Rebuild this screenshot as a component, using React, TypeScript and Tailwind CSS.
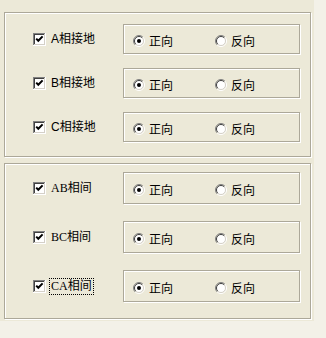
import React from 'react';

const etched = 'border border-[#aca899] shadow-[inset_1px_1px_0_#ffffff,1px_1px_0_#ffffff]';

function CheckBox() {
  return (
    <svg width="13" height="13" viewBox="0 0 13 13" className="shrink-0" shapeRendering="crispEdges">
      <rect x="0" y="0" width="13" height="13" fill="#ffffff" />
      <rect x="0" y="0" width="12" height="1" fill="#808080" />
      <rect x="0" y="0" width="1" height="12" fill="#808080" />
      <rect x="1" y="1" width="10" height="1" fill="#404040" />
      <rect x="1" y="1" width="1" height="10" fill="#404040" />
      <rect x="1" y="11" width="11" height="1" fill="#d4d0c8" />
      <rect x="11" y="1" width="1" height="11" fill="#d4d0c8" />
      <rect x="2" y="2" width="9" height="9" fill="#ffffff" />
      <path d="M3.2 5.6 L5.3 7.8 L9.6 3.4" stroke="#000" strokeWidth="2" fill="none" shapeRendering="auto" />
    </svg>
  );
}

function Radio({ checked }: { checked?: boolean }) {
  return (
    <svg width="12" height="12" viewBox="0 0 12 12" className="shrink-0">
      <circle cx="6" cy="6" r="4.5" fill="#ffffff" />
      <path d="M2.1 9.9 A5.5 5.5 0 0 1 9.9 2.1" stroke="#808080" strokeWidth="1" fill="none" />
      <path d="M9.9 2.1 A5.5 5.5 0 0 1 2.1 9.9" stroke="#ffffff" strokeWidth="1" fill="none" />
      <path d="M2.8 9.2 A4.5 4.5 0 0 1 9.2 2.8" stroke="#404040" strokeWidth="1" fill="none" />
      <path d="M9.2 2.8 A4.5 4.5 0 0 1 2.8 9.2" stroke="#d4d0c8" strokeWidth="1" fill="none" />
      {checked && <circle cx="6" cy="6" r="2" fill="#000" />}
    </svg>
  );
}

function Row({ label, latin, focus, tall }: { label: string; latin: string; focus?: boolean; tall?: boolean }) {
  return (
    <div className="flex items-center">
      <div className="flex items-center gap-[5px] w-[90px]">
        <CheckBox />
        <span
          className={`text-[12px] leading-[13px] text-black whitespace-nowrap ${focus ? 'outline outline-1 outline-dotted outline-black outline-offset-[1px]' : ''}`}
          style={{ fontFamily: `${latin}, "Noto Sans CJK SC", sans-serif` }}
        >
          {label}
        </span>
      </div>
      <div className={`flex items-center w-[177px] ${tall ? 'h-[32px]' : 'h-[30px]'} pl-[9px] pt-[3px] ${etched}`}>
        <div className="flex items-center gap-[4px] w-[82px]">
          <Radio checked />
          <span className="text-[12px] text-black" style={{ fontFamily: '"Noto Sans CJK SC", sans-serif' }}>正向</span>
        </div>
        <div className="flex items-center gap-[4px]">
          <Radio />
          <span className="text-[12px] text-black" style={{ fontFamily: '"Noto Sans CJK SC", sans-serif' }}>反向</span>
        </div>
      </div>
    </div>
  );
}

export default function App() {
  return (
    <div className="w-[326px] h-[338px] bg-[#f3f1e8]">
      <div className="w-[314px] h-[321px] bg-[#ece9d8] pt-[12px] pl-[4px]">
        {/* ground faults */}
        <div className={`w-[307px] h-[145px] flex flex-col gap-[14px] pt-[11px] pl-[28px] ${etched}`}>
          <Row label="A相接地" latin='"Liberation Sans"' />
          <Row label="B相接地" latin='"Liberation Sans"' />
          <Row label="C相接地" latin='"Liberation Sans"' />
        </div>

        {/* phase-to-phase */}
        <div className={`mt-[6px] w-[307px] h-[156px] flex flex-col gap-[17px] pt-[8px] pl-[28px] ${etched}`}>
          <Row label="AB相间" latin='"Liberation Serif"' tall />
          <Row label="BC相间" latin='"Liberation Serif"' tall />
          <Row label="CA相间" latin='"Liberation Serif"' tall focus />
        </div>
      </div>
    </div>
  );
}
